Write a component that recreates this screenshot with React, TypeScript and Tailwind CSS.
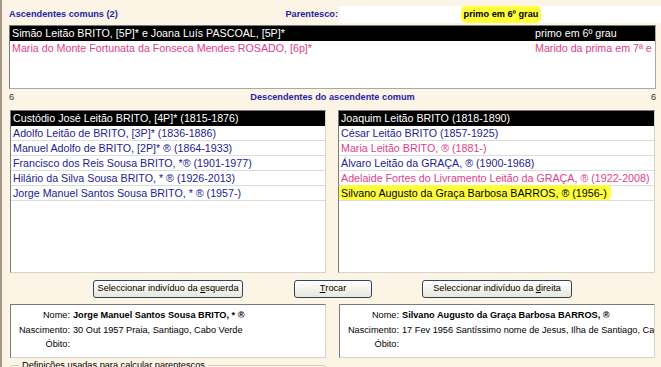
const ascendentes = [
  { nome: "Simão Leitão BRITO, [5P]* e Joana Luís PASCOAL, [5P]*", rel: "primo em 6º grau", sel: true, rosa: false },
  { nome: "Maria do Monte Fortunata da Fonseca Mendes ROSADO, [6p]*", rel: "Marido da prima em 7ª e 8º grau", sel: false, rosa: true },
];

const esquerda = [
  { nome: "Custódio José Leitão BRITO, [4P]* (1815-1876)", rosa: false },
  { nome: "Adolfo Leitão de BRITO, [3P]* (1836-1886)", rosa: false },
  { nome: "Manuel Adolfo de BRITO, [2P]* ® (1864-1933)", rosa: false },
  { nome: "Francisco dos Reis Sousa BRITO, *® (1901-1977)", rosa: false },
  { nome: "Hilário da Silva Sousa BRITO, * ® (1926-2013)", rosa: false },
  { nome: "Jorge Manuel Santos Sousa BRITO, * ® (1957-)", rosa: false },
];

const direita = [
  { nome: "Joaquim Leitão BRITO (1818-1890)", rosa: false },
  { nome: "César Leitão BRITO (1857-1925)", rosa: false },
  { nome: "Maria Leitão BRITO, ® (1881-)", rosa: true },
  { nome: "Álvaro Leitão da GRAÇA, ® (1900-1968)", rosa: false },
  { nome: "Adelaide Fortes do Livramento Leitão da GRAÇA, ® (1922-2008)", rosa: true },
  { nome: "Silvano Augusto da Graça Barbosa BARROS, ® (1956-)", rosa: false },
];

function Lista({ itens, largura, marcarUltimo }: { itens: { nome: string; rosa: boolean }[]; largura: string; marcarUltimo?: boolean }) {
  return (
    <div className={`${largura} h-[163px] bg-white border border-t-[#7a7a7a] border-l-[#7a7a7a] border-r-[#d6d3c8] border-b-[#d6d3c8] overflow-hidden text-[10.7px]`}>
      {itens.map((it, i) => (
        <div
          key={i}
          className={`h-[15px] leading-[14px] pl-[2px] whitespace-nowrap border-b ${
            i === 0 ? "bg-black text-white border-black" : it.rosa ? "text-[#e0418c] border-[#dcdcdc]" : "text-[#23238f] border-[#dcdcdc]"
          }`}
        >
          {marcarUltimo && i === itens.length - 1 ? (
            <span className="bg-[#ffff3a] text-black -ml-[2px] pl-[2px] pr-[4px] pt-[2px] pb-[1px] rounded-[4px]">{it.nome}</span>
          ) : (
            it.nome
          )}
        </div>
      ))}
    </div>
  );
}

function Detalhe({ nome, nascimento }: { nome: string; nascimento: string }) {
  return (
    <div className="w-[316px] h-[54px] bg-white border border-t-[#7a7a7a] border-l-[#7a7a7a] border-r-[#d6d3c8] border-b-[#d6d3c8] pt-[4px] text-[9.2px] text-black overflow-hidden">
      <div className="flex h-[14.5px] items-center whitespace-nowrap">
        <span className="w-[62px] shrink-0 text-right pr-[3px]">Nome:</span>
        <span className="font-bold">{nome}</span>
      </div>
      <div className="flex h-[14.5px] items-center whitespace-nowrap">
        <span className="w-[62px] shrink-0 text-right pr-[3px]">Nascimento:</span>
        <span>{nascimento}</span>
      </div>
      <div className="flex h-[14.5px] items-center whitespace-nowrap">
        <span className="w-[62px] shrink-0 text-right pr-[3px]">Óbito:</span>
      </div>
    </div>
  );
}

const botao = "h-[18px] rounded-[3px] border border-[#2b4660] bg-gradient-to-b from-white to-[#e9e6da] text-[9.2px] text-black flex items-center justify-center";

export default function App() {
  return (
    <div
      className="w-[661px] h-[367px] overflow-hidden bg-[#fcf4e4] border-l-2 border-[#a39684] pl-[7px]"
      style={{ fontFamily: '"Liberation Sans", Arial, sans-serif' }}
    >
      {/* CABEÇALHO */}
      <div className="flex items-center w-[654px] h-[17px] mt-[6px]">
        <div className="flex-1 font-bold text-[9.2px] text-[#1f1fa8]">Ascendentes comuns (2)</div>
        <div className="font-bold text-[9.2px] text-[#1f1fa8] pr-[1px]">Parentesco:</div>
        <div className="w-[324px] h-[17px] bg-white flex items-center justify-center">
          <span className="bg-[#ffff3a] rounded-[5px] px-[3px] py-[2px] font-bold text-[9.2px] text-black">primo em 6º grau</span>
        </div>
      </div>

      {/* ASCENDENTES */}
      <div className="w-[647px] h-[64px] mt-[2px] bg-white border border-t-[#7a7a7a] border-l-[#7a7a7a] border-r-[#a8a8a8] border-b-[#a8a8a8] overflow-hidden text-[10.7px]">
        {ascendentes.map((a, i) => (
          <div key={i} className={`flex h-[15px] leading-[15px] whitespace-nowrap ${a.sel ? "bg-black text-white" : "text-[#e0418c]"}`}>
            <span className="w-[525px] shrink-0 pl-[2px]">{a.nome}</span>
            <span className="flex-1 overflow-hidden">{a.rel}</span>
          </div>
        ))}
      </div>

      {/* CONTAGEM */}
      <div className="flex items-center justify-between w-[647px] h-[12px] mt-[3px] text-[9.2px]">
        <span className="text-[#333]">6</span>
        <span className="font-bold text-[#1f1fa8]">Descendentes do ascendente comum</span>
        <span className="text-[#333]">6</span>
      </div>

      {/* LISTAS */}
      <div className="flex mt-[6px] ml-[1px]">
        <Lista itens={esquerda} largura="w-[316px]" />
        <div className="ml-[12px]">
          <Lista itens={direita} largura="w-[317px]" marcarUltimo />
        </div>
      </div>

      {/* BOTÕES */}
      <div className="flex mt-[7px]">
        <button type="button" className={`${botao} w-[150px] ml-[84px]`}>
          Seleccionar indivíduo da&nbsp;<span className="underline">e</span>squerda
        </button>
        <button type="button" className={`${botao} w-[78px] ml-[51px]`}>
          <span className="underline">T</span>rocar
        </button>
        <button type="button" className={`${botao} w-[150px] ml-[50px]`}>
          Seleccionar indivíduo da&nbsp;<span className="underline">d</span>ireita
        </button>
      </div>

      {/* DETALHES */}
      <div className="flex mt-[6px] ml-[1px]">
        <Detalhe nome="Jorge Manuel Santos Sousa BRITO, * ®" nascimento="30 Out 1957 Praia, Santiago, Cabo Verde" />
        <div className="ml-[13px]">
          <Detalhe nome="Silvano Augusto da Graça Barbosa BARROS, ®" nascimento="17 Fev 1956 Santíssimo nome de Jesus, Ilha de Santiago, Cabo Verde" />
        </div>
      </div>

      {/* DEFINIÇÕES */}
      <fieldset className="w-[316px] ml-[1px] mt-[1px] h-[20px] border border-[#d0cdbf] rounded-[3px] px-[8px]">
        <legend className="px-[3px] text-[9.2px] text-black">Definições usadas para calcular parentescos</legend>
      </fieldset>
    </div>
  );
}
